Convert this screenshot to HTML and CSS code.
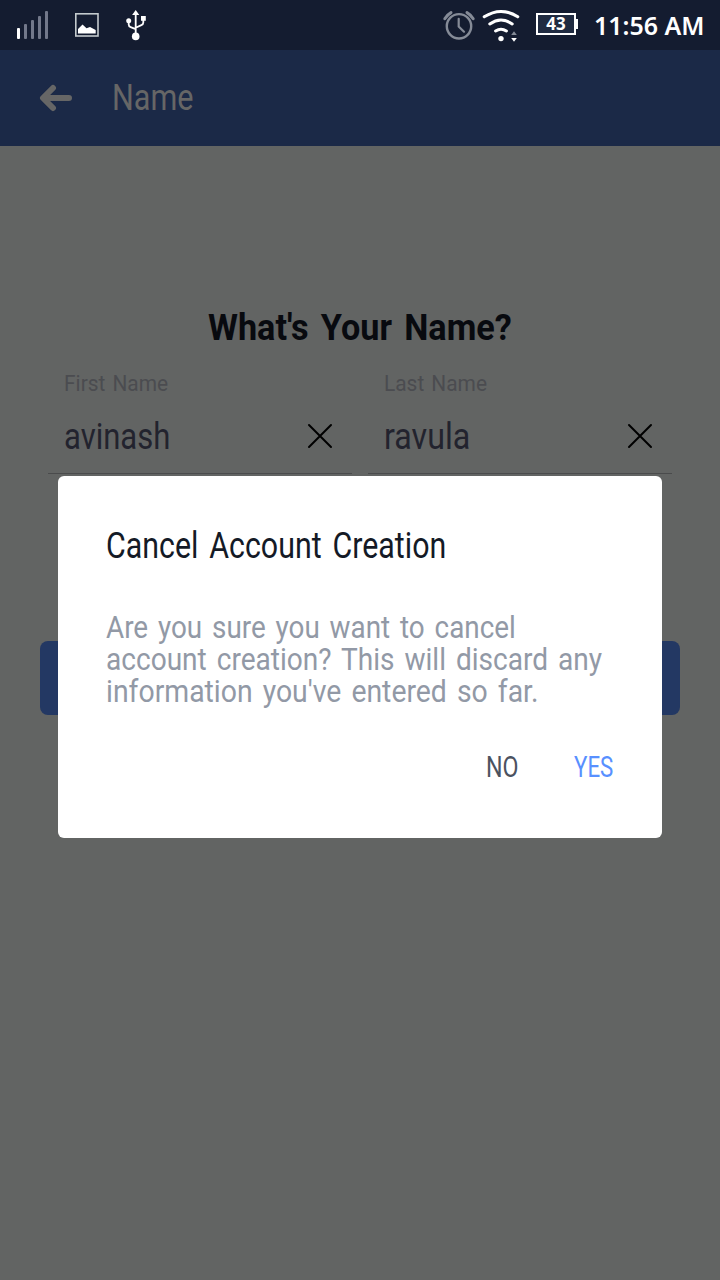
FILE: index.html
```html
<!DOCTYPE html>
<html lang="en">
<head>
<meta charset="utf-8">
<title>Name</title>
<link rel="stylesheet" href="styles.css">
</head>
<body>
<div class="screen">
  <header class="status">
    <svg class="status-left" width="160" height="50" viewBox="0 0 160 50">
      <rect x="17" y="28" width="3" height="11" rx="1" fill="#fff"/>
      <g fill="#72788a"><rect x="24" y="24" width="3" height="15" rx="1"/><rect x="31" y="20" width="3" height="19" rx="1"/><rect x="38" y="16" width="3" height="23" rx="1"/><rect x="45" y="11" width="3" height="28" rx="1"/></g>
      <rect x="75.8" y="13.8" width="22.2" height="22.2" fill="none" stroke="#c3cacd" stroke-width="1.6"/>
      <path d="M78 33.5V29l4.5-4.5 4 3.8 3.5-1.3 5.7 3V33.5z" fill="#fff"/>
      <g fill="none" stroke="#fff" stroke-width="1.8"><path d="M135.7 14v20M128.7 21v3.5q0 2 2 2.6l5 2M143.3 19v3.5q0 2-2 2.6l-5.6 2.6"/></g>
      <path d="M135.7 10l3.6 5h-7.2zM141 16h4.8v4.8H141z" fill="#fff"/>
      <circle cx="128.7" cy="20.8" r="2.5" fill="#fff"/><circle cx="135.7" cy="36.4" r="3.8" fill="#fff"/>
    </svg>
    <div class="status-right">
      <svg width="96" height="50" viewBox="440 0 96 50" fill="none" stroke-linecap="round">
        <g stroke="#858b97" stroke-width="2.4"><circle cx="459" cy="26.3" r="12.2"/><path d="M444.8 18.8q2.3-4 6.2-6.2M473.2 18.8q-2.3-4-6.2-6.2" stroke-width="3"/><path d="M458.7 18.8v7.7l5.3 5.2" stroke-width="2.2"/></g>
        <g stroke="#fff" stroke-width="3"><path d="M484.2 16.8q16.8-10.8 33.6 0M489.8 24q11.2-8 22.4 0M495.6 31q5.4-3.6 10.8 0"/></g>
        <circle cx="501" cy="38.6" r="2.7" fill="#fff"/>
        <path d="M514 31.3l2.8 3.6h-5.6z" fill="#858b97"/><path d="M511.2 38h5.6l-2.8 3.7z" fill="#fff"/>
      </svg>
      <div class="battery"><span class="battery-level">43</span></div>
      <span class="clock">11:56 AM</span>
    </div>
  </header>
  <nav class="appbar">
    <svg class="back" width="34" height="28" viewBox="39 84 34 28" fill="none" stroke="#666" stroke-width="6" stroke-linecap="round" stroke-linejoin="round"><path d="M69 98H44M53 88L43 98l10 10"/></svg>
    <span class="appbar-title">Name</span>
  </nav>
  <main class="form">
    <h1 class="heading"><span class="heading-text">What's Your Name?</span></h1>
    <div class="fields">
      <div class="field">
        <label class="label">First Name</label>
        <div class="entry"><span class="value value-first">avinash</span>
          <svg class="clear" width="26" height="26" viewBox="0 0 26 26"><path d="M2 2l22 22M24 2L2 24"/></svg></div>
      </div>
      <div class="field">
        <label class="label">Last Name</label>
        <div class="entry"><span class="value value-last">ravula</span>
          <svg class="clear" width="26" height="26" viewBox="0 0 26 26"><path d="M2 2l22 22M24 2L2 24"/></svg></div>
      </div>
    </div>
    <div class="next"></div>
  </main>
  <section class="dialog">
    <h2 class="dialog-title">Cancel Account Creation</h2>
    <p class="message"><span class="line line-a">Are you sure you want to cancel</span><span class="line line-b">account creation? This will discard any</span><span class="line line-c">information you've entered so far.</span></p>
    <div class="actions"><span class="action no">NO</span><span class="action yes">YES</span></div>
  </section>
</div>
</body>
</html>
```
FILE: styles.css
```css
* { box-sizing: border-box; margin: 0; padding: 0; }
body { font-family: Roboto, "Liberation Sans", sans-serif; font-weight: 400; }
svg { display: block; flex: none; }
span, h2, label { white-space: nowrap; transform-origin: 0 50%; }
.screen { position: relative; width: 720px; height: 1280px; overflow: hidden; background: #626463; }
.status { display: flex; justify-content: space-between; height: 50px; background: #141c30; }
.status-right { display: flex; width: 280px; }
.battery { position: relative; flex: none; width: 40px; height: 22px; margin-top: 13px; border: 2px solid #fff; background: #202b41; text-align: center; }
.battery::after { content: ""; position: absolute; left: 38px; top: 4px; width: 2px; height: 10px; background: #fff; }
.battery-level { display: block; color: #fff; font: 700 17px/17px "Noto Sans", sans-serif; }
.clock { display: block; width: 110px; margin-left: 18px; color: #fff; font: 600 26px/50px "Noto Sans", sans-serif; transform: scaleX(.96); }
.appbar { display: flex; align-items: center; height: 96px; padding-left: 39px; background: #1b2947; }
.appbar-title { margin-left: 39px; color: #666; font-size: 36px; transform: scaleX(.85); }
.form { display: flex; flex-direction: column; padding: 160px 40px 0; }
.heading { height: 42px; text-align: center; color: #080a0f; font-size: 36px; line-height: 44px; }
.heading-text { display: inline-block; word-spacing: 4px; transform: scaleX(.95); transform-origin: 50% 50%; }
.fields { display: flex; gap: 16px; padding: 23px 8px 0; }
.field { width: 304px; height: 103px; padding-left: 16px; border-bottom: 1px solid #4a4b4c; }
.label { display: block; height: 26px; color: #4b4c50; font-size: 22px; line-height: 26px; word-spacing: 2px; transform: scaleX(.95); }
.entry { display: flex; justify-content: space-between; align-items: center; height: 42px; margin-top: 19px; padding-right: 19px; }
.value { color: #22232e; font-size: 36px; }
.value-first { transform: scaleX(.862); }
.value-last { transform: scaleX(.895); }
.clear { margin-bottom: 2px; fill: none; stroke: #000; stroke-width: 2; stroke-linecap: round; }
.next { height: 74px; margin-top: 167px; border-radius: 8px; background: #233863; }
.dialog { position: absolute; left: 58px; top: 476px; width: 604px; height: 362px; padding: 48px; border-radius: 6px; background: #fff; }
.dialog-title { height: 42px; color: #141a26; font-size: 36px; font-weight: 400; line-height: 44px; word-spacing: 4px; transform: scaleX(.843); }
.message { margin-top: 45px; color: #9299a6; font-size: 32px; line-height: 32px; word-spacing: 3.4px; }
.line { display: block; }
.line-a { transform: scaleX(.87); }
.line-b { transform: scaleX(.877); }
.line-c { transform: scaleX(.887); }
.actions { display: flex; justify-content: flex-end; gap: 55px; margin-top: 43px; font-size: 29px; line-height: 34px; }
.no { width: 33px; color: #4b5260; transform: scaleX(.8); }
.yes { width: 40px; color: #5890ff; transform: scaleX(.77); }
```
